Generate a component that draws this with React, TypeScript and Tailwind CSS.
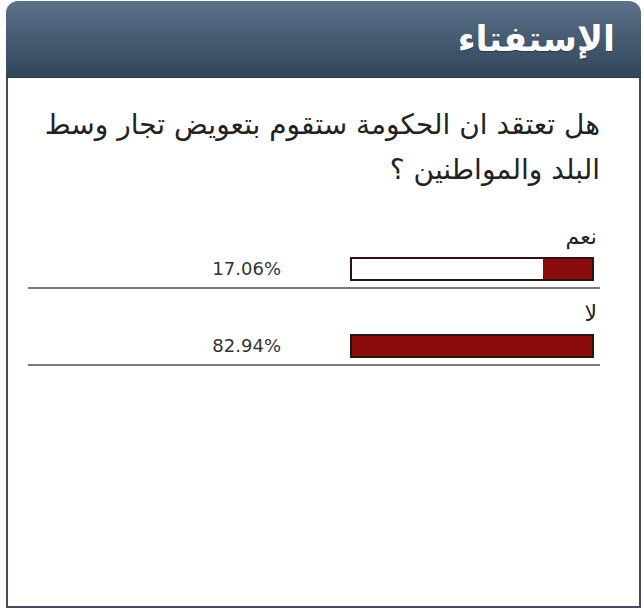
const poll = {
  title: "الإستفتاء",
  question: ["هل تعتقد ان الحكومة ستقوم بتعويض تجار وسط", "البلد والمواطنين ؟"],
  answers: [
    { label: "نعم", percent: "17.06%", fill: 49 },
    { label: "لا", percent: "82.94%", fill: 240 }
  ]
};

function ResultRow({ label, percent, fill }: { label: string; percent: string; fill: number }) {
  return (
    <div className="border-b-2 border-[#7a7a7a] pb-[6px]">
      <div className="pr-[3px] text-right text-[22px] leading-[20px] text-[#222]">{label}</div>
      <div className="mt-[10px] mr-[6px] flex items-center justify-end">
        <span className="mr-[69px] text-[18px] leading-[20px] text-[#333]" dir="ltr">
          {percent}
        </span>
        <div className="flex h-[24px] w-[244px] justify-end border-2 border-[#2b1410] bg-white">
          <div className="h-full bg-[#8a0c0c]" style={{ width: fill }} />
        </div>
      </div>
    </div>
  );
}

export default function App() {
  return (
    <div className="min-h-[613px] bg-white pl-[6px] pt-[1px] font-['DejaVu_Sans',sans-serif]" dir="ltr">
      <div className="w-[635px]">
        <div className="flex h-[77px] items-center justify-end rounded-t-[12px] border-b border-[#2a3848] bg-gradient-to-b from-[#5c728a] to-[#31455b] pr-[26px]">
          <h2
            className="text-[35px] font-bold leading-none text-white [text-shadow:0_1px_1px_rgba(0,0,0,0.35)]"
            dir="rtl"
          >
            {poll.title}
          </h2>
        </div>

        <div className="h-[530px] border-x-2 border-b-2 border-[#4a4a5c] pr-[39px] pl-[20px] pt-[24px]">
          <p className="text-right text-[28px] leading-[45px] text-[#222] whitespace-nowrap" dir="rtl">
            {poll.question[0]}
            <br />
            {poll.question[1]}
          </p>

          <div className="mt-[35px] flex flex-col gap-[15px]">
            {poll.answers.map((a) => (
              <ResultRow key={a.label} {...a} />
            ))}
          </div>
        </div>
      </div>
    </div>
  );
}
